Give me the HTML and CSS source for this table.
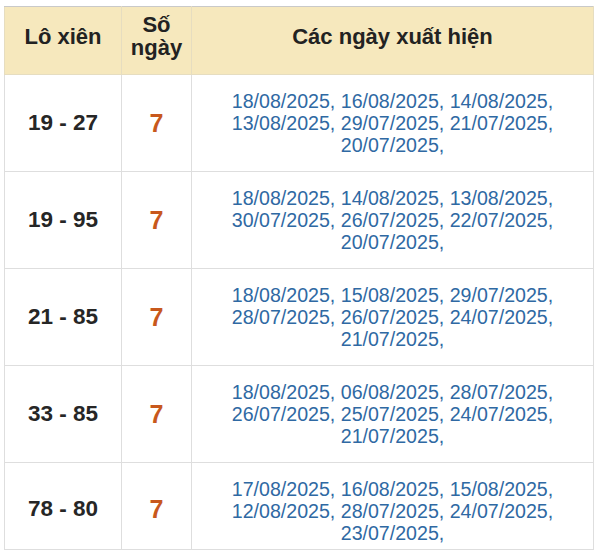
FILE: index.html
```html
<!DOCTYPE html>
<html>
<head>
<meta charset="utf-8">
<link rel="stylesheet" href="styles.css">
</head>
<body>
<table class="tbl">
  <colgroup>
    <col class="c1"><col class="c2"><col class="c3">
  </colgroup>
  <thead>
    <tr class="head">
      <th>Lô xiên</th>
      <th>Số<br>ngày</th>
      <th>Các ngày xuất hiện</th>
    </tr>
  </thead>
  <tbody>
    <tr class="row">
      <td class="pair">19 - 27</td>
      <td class="num">7</td>
      <td class="dates">18/08/2025, 16/08/2025, 14/08/2025, 13/08/2025, 29/07/2025, 21/07/2025, 20/07/2025,</td>
    </tr>
    <tr class="row">
      <td class="pair">19 - 95</td>
      <td class="num">7</td>
      <td class="dates">18/08/2025, 14/08/2025, 13/08/2025, 30/07/2025, 26/07/2025, 22/07/2025, 20/07/2025,</td>
    </tr>
    <tr class="row">
      <td class="pair">21 - 85</td>
      <td class="num">7</td>
      <td class="dates">18/08/2025, 15/08/2025, 29/07/2025, 28/07/2025, 26/07/2025, 24/07/2025, 21/07/2025,</td>
    </tr>
    <tr class="row">
      <td class="pair">33 - 85</td>
      <td class="num">7</td>
      <td class="dates">18/08/2025, 06/08/2025, 28/07/2025, 26/07/2025, 25/07/2025, 24/07/2025, 21/07/2025,</td>
    </tr>
    <tr class="row last">
      <td class="pair">78 - 80</td>
      <td class="num">7</td>
      <td class="dates">17/08/2025, 16/08/2025, 15/08/2025, 12/08/2025, 28/07/2025, 24/07/2025, 23/07/2025,</td>
    </tr>
  </tbody>
</table>
</body>
</html>
```

FILE: styles.css
```css
html, body {
  margin: 0;
  padding: 0;
  background: #ffffff;
}
body {
  padding: 6px 0 0 4px;
  font-family: "Liberation Sans", Arial, sans-serif;
}
.tbl {
  border-collapse: collapse;
  table-layout: fixed;
  width: 589px;
  border: 1px solid #c9c9c9;
}
.c1 { width: 117px; }
.c2 { width: 70px; }
.c3 { width: 402px; }
.tbl th, .tbl td {
  border: 1px solid #dedede;
  padding: 0;
  text-align: center;
  vertical-align: middle;
}
.tbl th {
  background: #f6e8bd;
  color: #222222;
  font-weight: bold;
  font-size: 22px;
  line-height: 23px;
  height: 68px;
  padding-bottom: 9px;
  box-sizing: border-box;
}
.tbl tr.head th { border-color: #e6ddc0; border-top-color: #c9c9c9; }
.row td { height: 96px; }
.tbl .row.last td { height: 76px; padding-top: 10px; }
.tbl .row.last .pair, .tbl .row.last .num { height: 80px; padding-top: 6px; }
.pair {
  font-size: 22.5px;
  font-weight: bold;
  color: #262626;
}
.num {
  font-size: 25px;
  font-weight: bold;
  color: #c8581c;
}
.tbl .dates {
  font-size: 19.6px;
  line-height: 22px;
  color: #2f69a3;
  padding-left: 20px;
  padding-right: 20px;
}
```
